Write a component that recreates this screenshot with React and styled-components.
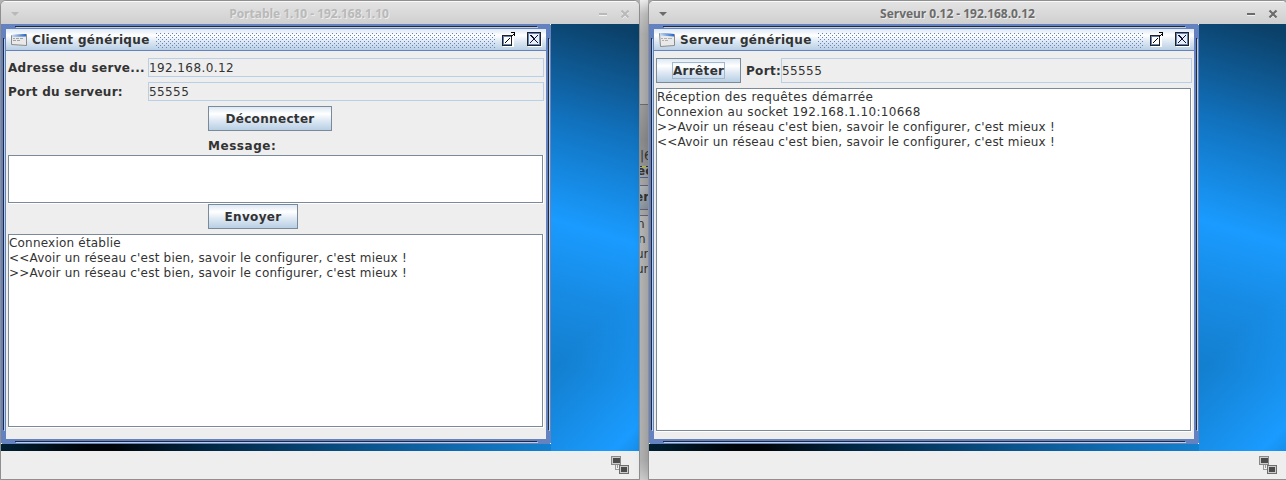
import React from "react";
import styled, { createGlobalStyle } from "styled-components";

const Global = createGlobalStyle`
  * { box-sizing: border-box; }
  body { margin: 0; overflow: hidden; background: #b2b2b2; }
`;

const ocean = "linear-gradient(#dde8f3 0%, #fff 30%, #dde8f3 60%, #b8cfe5 100%)";

const Screen = styled.main`
  display: flex;
  width: 1286px;
  height: 480px;
  overflow: hidden;
  font: 12px/15px "DejaVu Sans", sans-serif;
  color: #333;
  background: #b2b2b2;
`;

const Window = styled.section`
  flex: none;
  display: flex;
  flex-direction: column;
  width: 640px;
  height: 480px;
  border: 1px solid #8f8f8f;
  border-radius: 6px 6px 0 0;
  overflow: hidden;
  background: #eee;
  box-shadow: ${(p) => (p.$active ? "0 2px 14px rgba(0, 0, 0, 0.22)" : "none")};
`;

const WindowBar = styled.header`
  flex: none;
  display: flex;
  align-items: center;
  height: 23px;
  padding: 1px 9px 0 9px;
  border-top: 1px solid #fafafa;
  background: linear-gradient(#e3e3e3, #cfcfcf);
  color: ${(p) => (p.$active ? "#6b6b6b" : "#b9b9b9")};
`;

const WindowTitle = styled.h1`
  flex: 1;
  margin: 0;
  padding-left: ${(p) => (p.$active ? 1 : 0)}px;
  font: bold 12px/16px "Open Sans", sans-serif;
  letter-spacing: -0.03px;
  text-align: center;
  text-shadow: 1px 1px 0 #ececec;
`;

const Controls = styled.div`
  display: flex;
  gap: 13px;
`;

const Desktop = styled.div`
  flex: none;
  height: 427px;
  background:
    linear-gradient(90deg, #001f33 0, #000a12 65px, #000509 85px, #000509 112px, #002440 200px, #0b5792 380px, #1380d0 550px) 0 420px / 550px 7px no-repeat,
    linear-gradient(135deg, #1a9bff00 35%, #1a9bff 90%, #168eea 100%) 550px 257px / 88px 170px no-repeat,
    linear-gradient(196deg, #0b4068 0, #0b4068 9px, #0f5c98 68px, #1172be 112px, #1587df 162px, #1a9bff 212px, #178be4 280px, #137fcf 350px, #137fcf 100%) 550px 0 / 88px 427px no-repeat;
`;

const Status = styled.footer`
  flex: 1;
  display: flex;
  justify-content: flex-end;
  padding: 5px 10px 0 0;
`;

const groove = "linear-gradient(#23293a, #23293a)";
const shine = "linear-gradient(#b8cfe5, #b8cfe5)";
const corner = "linear-gradient(#fff, #fff)";

const Frame = styled.div`
  width: 550px;
  height: 420px;
  padding: 5px;
  background:
    ${corner} 0 419px / 1px 1px no-repeat,
    ${corner} 549px 419px / 1px 1px no-repeat,
    ${corner} 549px 0 / 1px 1px no-repeat,
    ${groove} 14px 2px / 522px 1px no-repeat,
    ${shine} 15px 3px / 522px 1px no-repeat,
    ${groove} 14px 417px / 522px 1px no-repeat,
    ${shine} 15px 418px / 522px 1px no-repeat,
    ${groove} 2px 14px / 1px 392px no-repeat,
    ${shine} 3px 15px / 1px 392px no-repeat,
    ${groove} 547px 14px / 1px 392px no-repeat,
    ${shine} 548px 15px / 1px 392px no-repeat,
    #6382bf;
`;

const FrameBar = styled.div`
  display: flex;
  align-items: center;
  height: 22px;
  padding: 0 4px 0 5px;
  border-bottom: 1px solid #6382bf;
  background: ${ocean};
`;

const FrameTitle = styled.h2`
  flex: none;
  width: ${(p) => p.$width}px;
  margin: 2px 0 0 5px;
  font: bold 12px/15px "DejaVu Sans", sans-serif;
  letter-spacing: 0.33px;
  white-space: nowrap;
`;

const Bumps = styled.div`
  flex: 1;
  height: 15px;
  margin: 2px 7px 0 0;
  background:
    conic-gradient(from 270deg at 1px 1px, #6382bf 90deg, transparent 0) 0 0 / 4px 4px,
    conic-gradient(from 270deg at 1px 1px, #6382bf 90deg, transparent 0) 2px 2px / 4px 4px;
`;

const FrameButtons = styled.div`
  display: flex;
  gap: 11px;
`;

const Pane = styled.div`
  height: 388px;
  padding: 7px 2px 0;
  background: #eee;
`;

const FieldRow = styled.div`
  display: flex;
  align-items: center;
  height: ${(p) => p.$height}px;
  margin-bottom: 5px;
`;

const Label = styled.label`
  flex: none;
  width: ${(p) => (p.$width ? p.$width + "px" : "auto")};
  padding-top: 1px;
  font-weight: bold;
  letter-spacing: ${(p) => p.$spacing ?? 0.33}px;
  white-space: nowrap;
`;

const Field = styled.div`
  flex: 1;
  display: flex;
  align-items: center;
  height: 100%;
  padding-top: 1px;
  border: 1px solid #b8cfe5;
  letter-spacing: 0.4px;
`;

const Middle = styled.div`
  display: flex;
  flex-direction: column;
  align-items: flex-start;
  gap: 7px;
  padding: 0 0 ${(p) => p.$bottom}px 200px;
`;

const Button = styled.button`
  display: flex;
  align-items: center;
  justify-content: center;
  width: ${(p) => p.$width}px;
  height: 25px;
  padding: ${(p) => (p.$focused ? 0 : "1px 0 0")};
  border: 1px solid #7a8a99;
  background: ${ocean};
  color: #333;
  font: bold 12px/15px "DejaVu Sans", sans-serif;
  letter-spacing: 0.33px;
`;

const Focus = styled.span`
  width: 53px;
  height: 17px;
  border: 1px solid #a3b8cc;
  line-height: 17px;
  text-align: center;
`;

const PortLabel = styled(Label)`
  padding-left: 5px;
`;

const TextArea = styled.div`
  height: ${(p) => p.$height}px;
  border-right: 1px solid #fff;
  border-bottom: 1px solid #fff;
`;

const TextInner = styled.div`
  height: 100%;
  padding-top: 1px;
  border: 1px solid #7a8a99;
  background: #fff;
  white-space: pre;
`;

const Line = styled.div`
  height: 15px;
  letter-spacing: ${(p) => p.$spacing}px;
`;

const Gap = styled.div`
  flex: none;
  width: 8px;
  height: 480px;
  overflow: hidden;
  background:
    linear-gradient(#c8c800, #c8c800) 2px 166px / 4px 1px no-repeat,
    linear-gradient(#efefef 0, #c8c8c8 14px, #b4b4b4 34px, #b4b4b4 104px, #6f6f6f 104px, #6f6f6f 105px, #a0a0a0 105px, #8f8f8f 140px, #999 166px, #333 166px, #333 167px, #a4a8b0 167px, #a4a8b0 177px, #56648a 177px, #56648a 178px, #aaa 178px, #aaa 185px, #667 185px, #667 186px, #b4b8bc 186px, #8c98a4 209px, #667 209px, #667 210px, #aaa 210px, #aaa 215px, #667 215px, #667 216px, #b8b8b8 216px, #b4b4b4 460px, #d0d0d0 480px);
`;

const Sliver = styled.div`
  height: ${(p) => p.$height || 15}px;
  margin-top: ${(p) => p.$top || 0}px;
  font-weight: ${(p) => (p.$bold ? "bold" : "normal")};
  text-indent: ${(p) => p.$indent || 0}px;
  white-space: nowrap;
`;

function MenuArrow() {
  return <svg width="10" height="6" viewBox="0 0 10 6"><path d="M1 1h8L5 5z" fill="currentColor" /></svg>;
}

function Minimize() {
  return <svg width="9" height="10" viewBox="0 0 9 10"><path d="M1 4h8v2H1z" fill="currentColor" /><path d="M1 6h8v1H1z" fill="#f2f2f2" /></svg>;
}

function CloseX() {
  return <svg width="10" height="10" viewBox="0 0 10 10"><path d="M2 3l6 6M8 3l-6 6" stroke="#f2f2f2" strokeWidth="2" /><path d="M1.500 1.500l7 7M8.500 1.500l-7 7" stroke="currentColor" strokeWidth="2.200" /></svg>;
}

function AppIcon({ tilted }) {
  const id = tilted ? "cap-tilted" : "cap";
  return (
    <svg width="16" height="16" viewBox="0 0 16 16">
      <defs><linearGradient id={id}><stop stopColor="#c4daf6" /><stop offset="1" stopColor="#2466c8" /></linearGradient></defs>
      {tilted ? (
        <>
          <path d="M.5 1.500L15.500 2.500 15.500 13.500 1.500 14.500z" fill="#e9e9e9" stroke="#8b8b8b" />
          <path d="M1 1L15 2v2.500L1 3.500z" fill={`url(#${id})`} />
          <path d="M2 6.500h2M5 6.500h3M9 6.500h4M3 8.500h2M6 8.500h3" stroke="#b0b0b0" />
        </>
      ) : (
        <>
          <path d="M.5 3.500L15.500 2.500 15.500 13.500 .5 12.500z" fill="#e9e9e9" stroke="#8b8b8b" />
          <path d="M1 3L15 2v2.500L1 5z" fill={`url(#${id})`} />
          <path d="M2 6.500h2M5 6.500h3M9 6.500h3M2 8.500h3M6 8.500h3" stroke="#a2a2a2" />
        </>
      )}
    </svg>
  );
}

function Maximize() {
  return (
    <svg width="14" height="15" viewBox="0 0 14 15" shapeRendering="crispEdges">
      <path d="M1 4h11v11H1z" fill="#fff" />
      <path d="M.5 3.500h9v9h-9z" fill="none" stroke="#222" />
      <path d="M1.500 4.500h8v8h-8z" fill="#fff" stroke="#6382bf" />
      <path d="M0 13h10v1H0zM9 5h1v9H9z" fill="#222" />
      <path d="M3 10h1v1H3zM4 9h1v1H4zM5 8h1v1H5zM6 7h1v1H6zM7 6h1v1H7zM9 4h1v1H9zM10 3h1v1h-1zM11 2h1v1h-1zM9 0h4v4h-1V1H9z" fill="#000" />
    </svg>
  );
}

function CloseBox() {
  return (
    <svg width="15" height="15" viewBox="0 0 15 15" shapeRendering="crispEdges">
      <path d="M1 1h14v14H1z" fill="#fff" />
      <path d="M.5 .5h13v13H.5z" fill="none" stroke="#222" />
      <path d="M1.500 1.500h11v11h-11z" fill="#e8f0f8" stroke="#6382bf" />
      <path d="M3 3h2v1h1v1h1v1h1V5h1V4h1V3h1v1h-1v1h-1v1H8v2h1v1h1v1h1v1h-1v-1H9V9H8V8H6v1H5v1H4v1H3v-1h1V9h1V8h1V6H5V5H4V4H3z" fill="#101038" />
    </svg>
  );
}

function NetworkIcon() {
  return (
    <svg width="18" height="18" viewBox="0 0 18 18" shapeRendering="crispEdges">
      <path d="M4.500 9v4.500H8M6.500 9v2.500" fill="none" stroke="#999" />
      <path d="M.5 .5h9v8h-9z" fill="#ccc" stroke="#888" />
      <path d="M2 2h7v5H2z" fill="#4b4b4b" />
      <path d="M8.500 9.500h9v8h-9z" fill="#ccc" stroke="#6e6e6e" />
      <path d="M10 11h6v5h-6z" fill="#4b4b4b" />
    </svg>
  );
}

function AppWindow({ active, title, frameTitle, titleWidth, children }) {
  return (
    <Window $active={active}>
      <WindowBar $active={active}>
        <MenuArrow />
        <WindowTitle $active={active}>{title}</WindowTitle>
        <Controls><Minimize /><CloseX /></Controls>
      </WindowBar>
      <Desktop>
        <Frame>
          <FrameBar>
            <AppIcon tilted={active} />
            <FrameTitle $width={titleWidth}>{frameTitle}</FrameTitle>
            <Bumps />
            <FrameButtons><Maximize /><CloseBox /></FrameButtons>
          </FrameBar>
          <Pane>{children}</Pane>
        </Frame>
      </Desktop>
      <Status><NetworkIcon /></Status>
    </Window>
  );
}

function Log({ height, lines = [] }) {
  return (
    <TextArea $height={height}>
      <TextInner>{lines.map(([text, spacing]) => <Line key={text} $spacing={spacing}>{text}</Line>)}</TextInner>
    </TextArea>
  );
}

const phrase = "Avoir un réseau c'est bien, savoir le configurer, c'est mieux !";

export default function App() {
  return (
    <Screen>
      <Global />
      <AppWindow title="Portable 1.10 - 192.168.1.10" frameTitle="Client générique" titleWidth={124}>
        <FieldRow $height={19}><Label $width={140}>Adresse du serve...</Label><Field>192.168.0.12</Field></FieldRow>
        <FieldRow $height={19}><Label $width={140} $spacing={0.27}>Port du serveur:</Label><Field>55555</Field></FieldRow>
        <Middle $bottom={1}>
          <Button $width={124}>Déconnecter</Button>
          <Label $spacing={0.55}>Message:</Label>
        </Middle>
        <Log height={49} />
        <Middle $bottom={5}><Button $width={90}>Envoyer</Button></Middle>
        <Log height={194} lines={[["Connexion établie", 0.2], ["<<" + phrase, 0.205], [">>" + phrase, 0.205]]} />
      </AppWindow>
      <Gap>
        <Sliver $top={149} $indent={0}>|6</Sliver>
        <Sliver $bold $height={13} $indent={-3}>ec</Sliver>
        <Sliver $bold $top={13} $indent={-5}>er</Sliver>
        <Sliver $top={12} $indent={-3}>n</Sliver>
        <Sliver $indent={-2}>n</Sliver>
        <Sliver $indent={-4}>ur</Sliver>
        <Sliver $indent={-4}>ur</Sliver>
      </Gap>
      <AppWindow active title="Serveur 0.12 - 192.168.0.12" frameTitle="Serveur générique" titleWidth={138}>
        <FieldRow $height={25}>
          <Button $width={85} $focused><Focus>Arrêter</Focus></Button>
          <PortLabel $width={40}>Port:</PortLabel>
          <Field>55555</Field>
        </FieldRow>
        <Log
          height={344}
          lines={[
            ["Réception des requêtes démarrée", 0.41],
            ["Connexion au socket 192.168.1.10:10668", 0.33],
            [">>" + phrase, 0.205],
            ["<<" + phrase, 0.205],
          ]}
        />
      </AppWindow>
    </Screen>
  );
}
